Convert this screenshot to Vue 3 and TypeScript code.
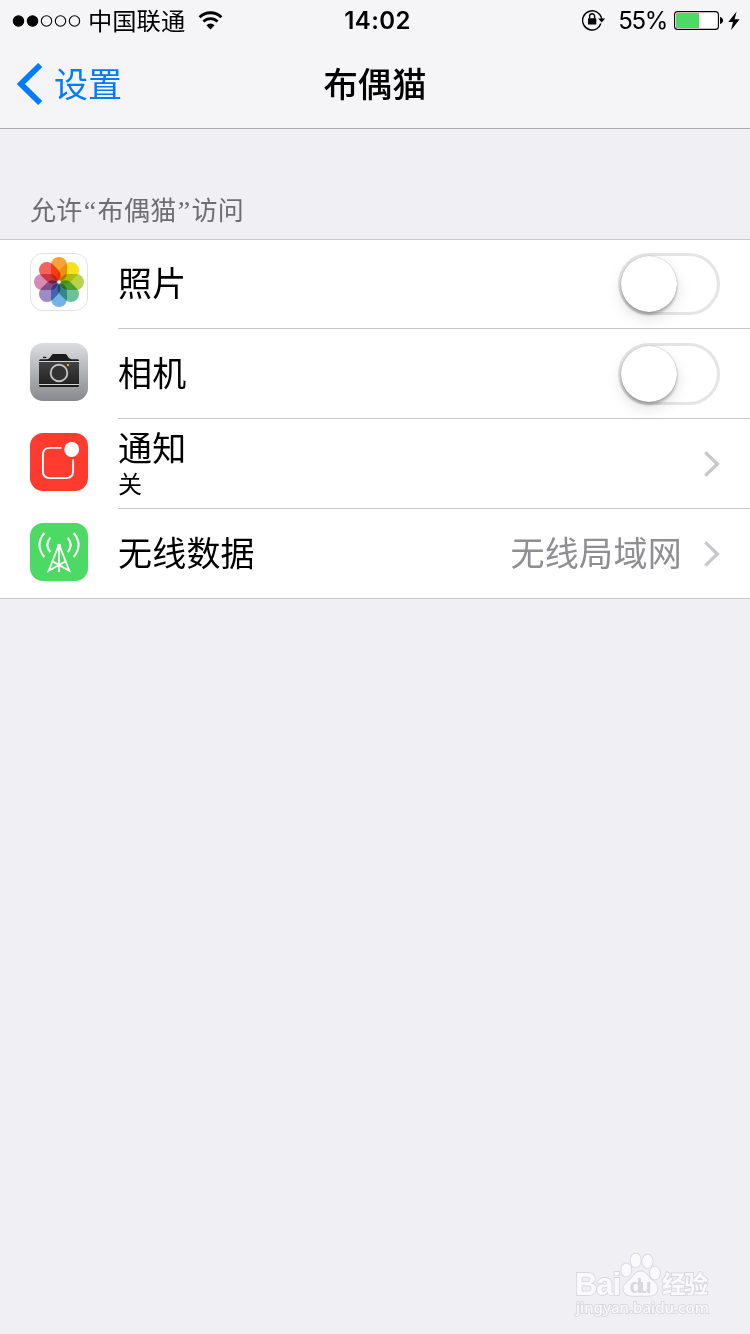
<script setup lang="ts">
import { ref } from 'vue'

type IconName = 'photos' | 'camera' | 'notifications' | 'cellular'

interface Row {
  icon: IconName
  label: string
  detail?: string
  value?: string
  toggle?: boolean
}

const rows: Row[] = [
  { icon: 'photos', label: '照片', toggle: true },
  { icon: 'camera', label: '相机', toggle: true },
  { icon: 'notifications', label: '通知', detail: '关' },
  { icon: 'cellular', label: '无线数据', value: '无线局域网' },
]

const petals = ['#f9a136', '#f4e31c', '#b5d449', '#6cc19a', '#6fb5e6', '#9a8cc6', '#d58bb4', '#f5635a']

const enabled = ref<Record<string, boolean>>({ photos: false, camera: false })

function toggle(name: IconName) {
  enabled.value[name] = !enabled.value[name]
}
</script>

<template>
  <div class="screen">
    <header class="top">
      <div class="status">
        <div class="status-left">
          <svg class="signal" width="70" height="14" viewBox="0 0 70 14">
            <circle v-for="n in 5" :key="n" :cx="n * 14 - 7.5" cy="7" r="5.2" :fill="n < 3 ? '#000' : 'none'" stroke="#000" stroke-width="1.1" />
          </svg>
          <span class="carrier">中国联通</span>
          <svg class="wifi" width="25" height="19" viewBox="0 0 24 19">
            <path d="M1.1 6.2A15.5 15.5 0 0 1 22.9 6.2" fill="none" stroke="#000" stroke-width="2.9" />
            <path d="M4.9 10.5A10 10 0 0 1 19.1 10.5" fill="none" stroke="#000" stroke-width="2.7" />
            <path d="M12 18.4L7.9 14.2Q12 10.8 16.1 14.2Z" />
          </svg>
        </div>
        <span class="time">14:02</span>
        <div class="status-right">
          <svg class="lock" width="24" height="22" viewBox="0 0 24 22">
            <path d="M15.7 19.3A9.6 9.6 0 1 1 19.7 10" fill="none" stroke="#000" stroke-width="1.4" />
            <path d="M16.2 9.6H23.2L19.7 13.4Z" />
            <path d="M18.8 14.5A9.6 9.6 0 0 1 15.4 19.2" fill="none" stroke="#000" stroke-width="1.4" />
            <rect x="6" y="9.3" width="8.3" height="6.3" rx=".6" />
            <path d="M7.6 9.5V7.4a2.5 2.6 0 0 1 5 0V9.5" fill="none" stroke="#000" stroke-width="1.4" />
          </svg>
          <span class="percent">55%</span>
          <svg class="battery" width="50" height="20" viewBox="0 0 50 20">
            <rect x=".6" y=".6" width="43.8" height="17.8" rx="3" fill="#fff" stroke="#000" stroke-width="1.1" />
            <path d="M3.5 2H25V17H3.5Q2 17 2 15.5V3.5Q2 2 3.5 2Z" fill="#4cd964" />
            <path d="M46 6Q49 6.6 49 9.5T46 13Z" />
          </svg>
          <svg class="bolt" width="12" height="20" viewBox="0 0 12 20">
            <path d="M8.6 .5L.3 11H5L3 19.3L11.6 8.2H6.6Z" />
          </svg>
        </div>
      </div>
      <nav class="nav">
        <a class="back">
          <svg width="26" height="42" viewBox="0 0 26 42">
            <path d="M23.2 2L3.9 21L23.2 40" fill="none" stroke="#007aff" stroke-width="5.8" />
          </svg>
          <span class="back-label">设置</span>
        </a>
        <h1 class="title">布偶猫</h1>
      </nav>
    </header>

    <h2 class="section">允许<span class="quote">“</span>布偶猫<span class="quote">”</span>访问</h2>

    <ul class="list">
      <li v-for="row in rows" :key="row.icon" class="row">
        <svg v-if="row.icon === 'photos'" class="icon" viewBox="0 0 58 58">
          <rect x=".5" y=".5" width="57" height="57" rx="12.5" fill="#fff" stroke="#e2e2e4" />
          <g class="flower">
            <rect v-for="(c, i) in petals" :key="c" class="petal" x="21" y="4" width="16" height="24" rx="8" :fill="c" :transform="`rotate(${i * 45} 29 29)`" />
          </g>
          <circle cx="29" cy="29" r="1.8" fill="#fff" />
        </svg>
        <svg v-else-if="row.icon === 'camera'" class="icon" viewBox="0 0 58 58">
          <defs>
            <linearGradient id="steel" x1="0" y1="0" x2="0" y2="1">
              <stop offset="0" stop-color="#dcdddf" />
              <stop offset="1" stop-color="#88898e" />
            </linearGradient>
            <linearGradient id="body" x1="0" y1="0" x2="0" y2="1">
              <stop offset="0" stop-color="#424242" />
              <stop offset="1" stop-color="#242424" />
            </linearGradient>
          </defs>
          <rect width="58" height="58" rx="13" fill="url(#steel)" />
          <path d="M9 18Q9 16.3 10.2 16.3H17Q19.3 16 20.5 14L21.5 12.2Q22.2 11 23.6 11H34.8Q36.2 11 37 12.2L38 14Q39.3 16 41.5 16.3H47.8Q49 16.3 49 18V42.5Q49 44 47.5 44H10.5Q9 44 9 42.5Z" fill="#1b1b1c" />
          <path d="M13 13.8H16.3V15.1H13Z" fill="#111" />
          <rect x="9" y="19" width="40" height="21.5" fill="url(#body)" />
          <path d="M9 18.5H49M9 41.5H49" stroke="#d4d5d6" stroke-width="1" />
          <circle cx="29" cy="30" r="8.3" fill="#333334" stroke="#c0c1c3" stroke-width="1.9" />
          <rect x="37" y="21" width="2" height="2" fill="#efa91e" />
        </svg>
        <svg v-else-if="row.icon === 'notifications'" class="icon" viewBox="0 0 58 58">
          <rect width="58" height="58" rx="13" fill="#ff3b30" />
          <path d="M31.5 14.9H20Q12.9 14.9 12.9 22V38Q12.9 45.1 20 45.1H36Q43.1 45.1 43.1 38V26.5" fill="none" stroke="#fff" stroke-width="1.9" />
          <circle cx="41.7" cy="16.4" r="7.5" fill="#fff" />
        </svg>
        <svg v-else class="icon" viewBox="0 0 58 58">
          <rect width="58" height="58" rx="13" fill="#4cd964" />
          <g fill="none" stroke="#fff" stroke-width="2.1">
            <path d="M14.3 10Q4.6 21.7 14.3 34M43.7 10Q53.4 21.7 43.7 34" />
            <path d="M20.3 14.6Q14.4 21.7 20.3 29.2M37.7 14.6Q43.6 21.7 37.7 29.2" />
            <path d="M28 24L18.7 47.8L35.5 38.4M30 24L39.3 47.8L22.5 38.4M29 24V49" stroke-width="1.8" />
          </g>
          <circle cx="29" cy="22.8" r="2.1" fill="#fff" />
        </svg>

        <div class="content">
          <div class="labels">
            <span class="label">{{ row.label }}</span>
            <span v-if="row.detail" class="detail">{{ row.detail }}</span>
          </div>
          <button v-if="row.toggle" class="switch" :class="{ on: enabled[row.icon] }" type="button" @click="toggle(row.icon)">
            <span class="knob"></span>
          </button>
          <template v-else>
            <span v-if="row.value" class="value">{{ row.value }}</span>
            <svg class="chevron" width="16" height="26" viewBox="0 0 16 26">
              <path d="M1.3 1.3L13.4 13L1.3 24.7" fill="none" stroke="#c7c7cc" stroke-width="3.2" />
            </svg>
          </template>
        </div>
      </li>
    </ul>

    <svg class="watermark" width="140" height="70" viewBox="0 0 140 70">
      <g class="mark">
        <text x="4" y="45" class="bai" textLength="46">Bai</text>
        <ellipse cx="55.3" cy="20" rx="5" ry="6.6" />
        <ellipse cx="64.7" cy="10.5" rx="5" ry="6.9" />
        <ellipse cx="76.5" cy="11.3" rx="5.1" ry="6.6" />
        <ellipse cx="84" cy="23" rx="5" ry="6.4" />
        <path d="M69.5 21.5C74.5 21.5 76.5 26 79.5 29C83.5 32 87 35 86.5 39C86 45 81 46.5 69.5 45.5C58 46.5 53 45 52.5 39C52 35 56.5 32 59.5 29C62.5 26 64.5 21.5 69.5 21.5Z" />
        <text x="91" y="43" class="exp" textLength="46">经验</text>
        <text x="5" y="63" class="url" textLength="133" lengthAdjust="spacingAndGlyphs">jingyan.baidu.com</text>
      </g>
      <text x="58.5" y="43" class="du" textLength="22">du</text>
    </svg>
  </div>
</template>

<style>
html,
body {
  background: #efeff4;
}
</style>

<style scoped>
.screen {
  position: relative;
  width: 750px;
  height: 1334px;
  overflow: hidden;
  background: #efeff4;
  color: #000;
  font-family: Inter, 'Noto Sans CJK SC', sans-serif;
}

.top {
  box-sizing: border-box;
  height: 129px;
  border-bottom: 1px solid #a9a9b0;
  background: #f5f5f7;
}

.status {
  display: grid;
  grid-template-columns: 1fr auto 1fr;
  align-items: center;
  height: 41px;
  padding: 0 10px 0 12px;
}

.status-left,
.status-right {
  display: flex;
  align-items: center;
}

.status-right {
  justify-content: flex-end;
}

.carrier {
  margin: 0 13px 0 6px;
  font-size: 24.3px;
  line-height: 40px;
}

.wifi {
  margin-bottom: 1px;
}

.time {
  margin-left: 3px;
  font-size: 24px;
  font-weight: 600;
  line-height: 42px;
  letter-spacing: 0.4px;
}

.lock {
  margin-bottom: 2px;
}

.percent {
  margin: 0 7px 0 12px;
  font-size: 24px;
  line-height: 40px;
  letter-spacing: -1.3px;
}

.bolt {
  margin-left: 4px;
}

.nav {
  position: relative;
  display: flex;
  align-items: center;
  justify-content: center;
  height: 87px;
}

.back {
  position: absolute;
  top: 0;
  left: 17px;
  display: flex;
  align-items: center;
  gap: 11px;
  height: 86px;
  color: #007aff;
  font-size: 34px;
}

.back-label {
  height: 42px;
  line-height: 44px;
}

.title {
  margin: 0;
  font-size: 34.3px;
  font-weight: 500;
  line-height: 88px;
}

.section {
  box-sizing: border-box;
  height: 110px;
  margin: 0;
  padding: 62px 30px 0;
  color: #6d6d72;
  font-size: 26px;
  font-weight: 400;
  line-height: 40px;
  letter-spacing: 0.3px;
}

.quote {
  display: inline-block;
  width: 15px;
  font-family: 'Liberation Serif', serif;
  font-size: 28px;
  line-height: 30px;
  text-align: center;
}

.list {
  margin: 0;
  padding: 0;
  border-top: 1px solid #c8c7cc;
  border-bottom: 1px solid #c8c7cc;
  background: #fff;
  list-style: none;
}

.row {
  display: flex;
  height: 90px;
  padding-left: 30px;
}

.row:first-child,
.row:last-child {
  height: 89px;
}

.icon {
  flex: none;
  width: 58px;
  height: 58px;
  margin: 14px 30px 0 0;
}

.row:first-child .icon {
  margin-top: 13px;
}

.flower {
  isolation: isolate;
}

.petal {
  mix-blend-mode: multiply;
}

.content {
  box-sizing: border-box;
  display: flex;
  flex: 1;
  align-items: center;
  padding-right: 30px;
  border-bottom: 1px solid #c8c7cc;
}

.row:last-child .content {
  border-bottom: 0;
}

.labels {
  display: flex;
  flex: 1;
  flex-direction: column;
}

.label {
  font-size: 34px;
  line-height: 40px;
  letter-spacing: 0.2px;
}

.label:not(:last-child) {
  padding-top: 1px;
}

.detail {
  font-size: 24px;
  line-height: 31px;
}

.value {
  margin-right: 22px;
  color: #8e8e93;
  font-size: 34px;
  line-height: 40px;
  letter-spacing: 0.3px;
}

.switch {
  box-sizing: border-box;
  width: 102px;
  height: 62px;
  padding: 0;
  border: 3px solid #e5e5e5;
  border-radius: 31px;
  background: #fff;
}

.switch.on {
  border-color: #4cd964;
  background: #4cd964;
}

.knob {
  display: block;
  width: 56px;
  height: 56px;
  border-radius: 50%;
  background: #fff;
  box-shadow: 0 6px 16px rgba(0, 0, 0, 0.12), 0 3px 3px rgba(0, 0, 0, 0.24), 0 0 1px rgba(0, 0, 0, 0.4);
}

.switch.on .knob {
  margin-left: 40px;
}

.watermark {
  position: absolute;
  top: 1250px;
  left: 571px;
}

.mark {
  fill: #fafafc;
  stroke: #d9d9dd;
  stroke-width: 1.8px;
  paint-order: stroke;
}

.bai {
  font: bold 31px 'Liberation Sans', sans-serif;
}

.du {
  fill: #d8d8dd;
  font: bold 21px 'Liberation Sans', sans-serif;
}

.exp {
  font: bold 24px 'Noto Sans CJK SC', sans-serif;
}

.url {
  font: 500 15px 'Noto Sans', sans-serif;
}
</style>
